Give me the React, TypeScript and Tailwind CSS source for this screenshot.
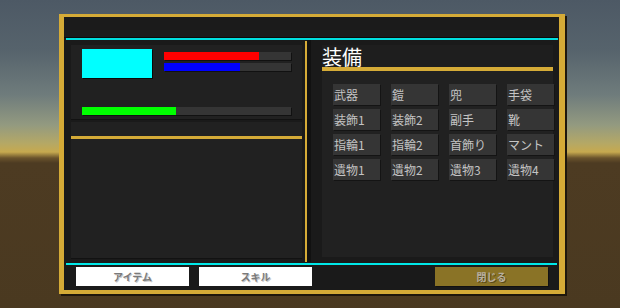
import React from "react";

const slots = [
  "武器", "鎧", "兜", "手袋",
  "装飾1", "装飾2", "副手", "靴",
  "指輪1", "指輪2", "首飾り", "マント",
  "遺物1", "遺物2", "遺物3", "遺物4",
];

const jp = { fontFamily: '"Noto Sans CJK JP", "Noto Sans", sans-serif' };

function Bar({ w, fill, color, h = 8 }: { w: number; fill: number; color: string; h?: number }) {
  return (
    <div className="bg-[#353535] shadow-[1px_1px_0_#111]" style={{ width: w, height: h }}>
      <div style={{ width: fill, height: h, background: color }} />
    </div>
  );
}

export default function App() {
  return (
    <div
      className="w-[620px] h-[308px] overflow-hidden pt-[14px] pl-[59px] bg-[linear-gradient(to_bottom,#4d5965_0px,#56636c_50px,#6f7c7c_95px,#939a80_125px,#b4a866_143px,#c6a94f_152px,#6a532c_158px,#4d3b22_163px,#4a3920_308px)]"
      style={jp}
    >
      <div className="w-[506px] h-[280px] border-l-[5px] border-t-[3px] border-r-[6px] border-b-[4px] border-[#d5ab37] bg-[#1a1a1a] shadow-[2px_2px_0_#1e170c] flex flex-col">
        <div className="h-[20px] bg-[#1b1b1b]" />
        <div className="h-[1px] bg-[#0b0b0b]" />
        <div className="h-[2px] bg-[#00dede] ml-[2px] mr-[1px]" />
        <div className="flex h-[223px]">
          <div className="w-[241px] pl-[7px] pt-[5px] flex flex-col">
            <div className="w-[231px] h-[74px] bg-[#212121] shadow-[0_1px_0_#121212] relative">
              <div className="flex pt-[4px] pl-[11px]">
                <div className="w-[70px] h-[29px] bg-[#00ffff] shadow-[1px_1px_0_#0a0a0a]" />
                <div className="ml-[12px] pt-[3px] flex flex-col gap-[3px]">
                  <Bar w={127} fill={95} color="#ff0000" />
                  <Bar w={127} fill={76} color="#0000ff" />
                </div>
              </div>
              <div className="pl-[11px] pt-[29px]">
                <Bar w={209} fill={94} color="#00ff00" />
              </div>
            </div>
            <div className="w-[231px] h-[136px] mt-[3px] bg-[#212121] shadow-[0_1px_0_#121212] pt-[14px]">
              <div className="h-[3px] bg-[#d5ab37]" />
            </div>
          </div>
          <div className="mt-[1px] w-[2px] h-[221px] bg-[#d5ab37]" />
          <div className="w-[4px] h-[222px] bg-[#111]" />
          <div className="pl-[11px] pt-[5px]">
            <div className="w-[231px] h-[212px] flex flex-col">
              <div className="h-[22px] bg-[#1e1e1e] text-white text-[20px] leading-[22px] pt-[1px]" style={jp}>
                装備
              </div>
              <div className="h-[4px] bg-[#d5ab37] shadow-[0_1px_0_#111]" />
              <div className="flex-1 bg-[#212121] pt-[13px] pl-[11px]">
                <div className="grid grid-cols-[repeat(4,47px)] gap-x-[11px] gap-y-[4px]">
                  {slots.map((s) => (
                    <div
                      key={s}
                      className="h-[21px] bg-[#353535] shadow-[1px_1px_0_#141414] text-[12px] leading-[21px] text-[#c4c4c4] pl-[1px] whitespace-nowrap"
                      style={jp}
                    >
                      {s}
                    </div>
                  ))}
                </div>
              </div>
            </div>
          </div>
        </div>
        <div className="h-[2px] bg-[#00e8e8] ml-[2px] mr-[2px]" />
        <div className="flex pt-[2px] pl-[12px]">
          <div className="w-[113px] h-[19px] bg-white flex items-center justify-center text-[10px] font-bold text-[#7a7a7a] [text-shadow:1px_1px_0_#c8c8c8]" style={jp}>
            アイテム
          </div>
          <div className="ml-[10px] w-[113px] h-[19px] bg-white flex items-center justify-center text-[10px] font-bold text-[#7a7a7a] [text-shadow:1px_1px_0_#c8c8c8]" style={jp}>
            スキル
          </div>
          <div className="ml-[123px] w-[113px] h-[19px] bg-[#8a7326] shadow-[1px_1px_0_#111] flex items-center justify-center text-[10px] font-bold text-[#b8b0a0] [text-shadow:1px_1px_0_#5a4a18]" style={jp}>
            閉じる
          </div>
        </div>
      </div>
    </div>
  );
}
